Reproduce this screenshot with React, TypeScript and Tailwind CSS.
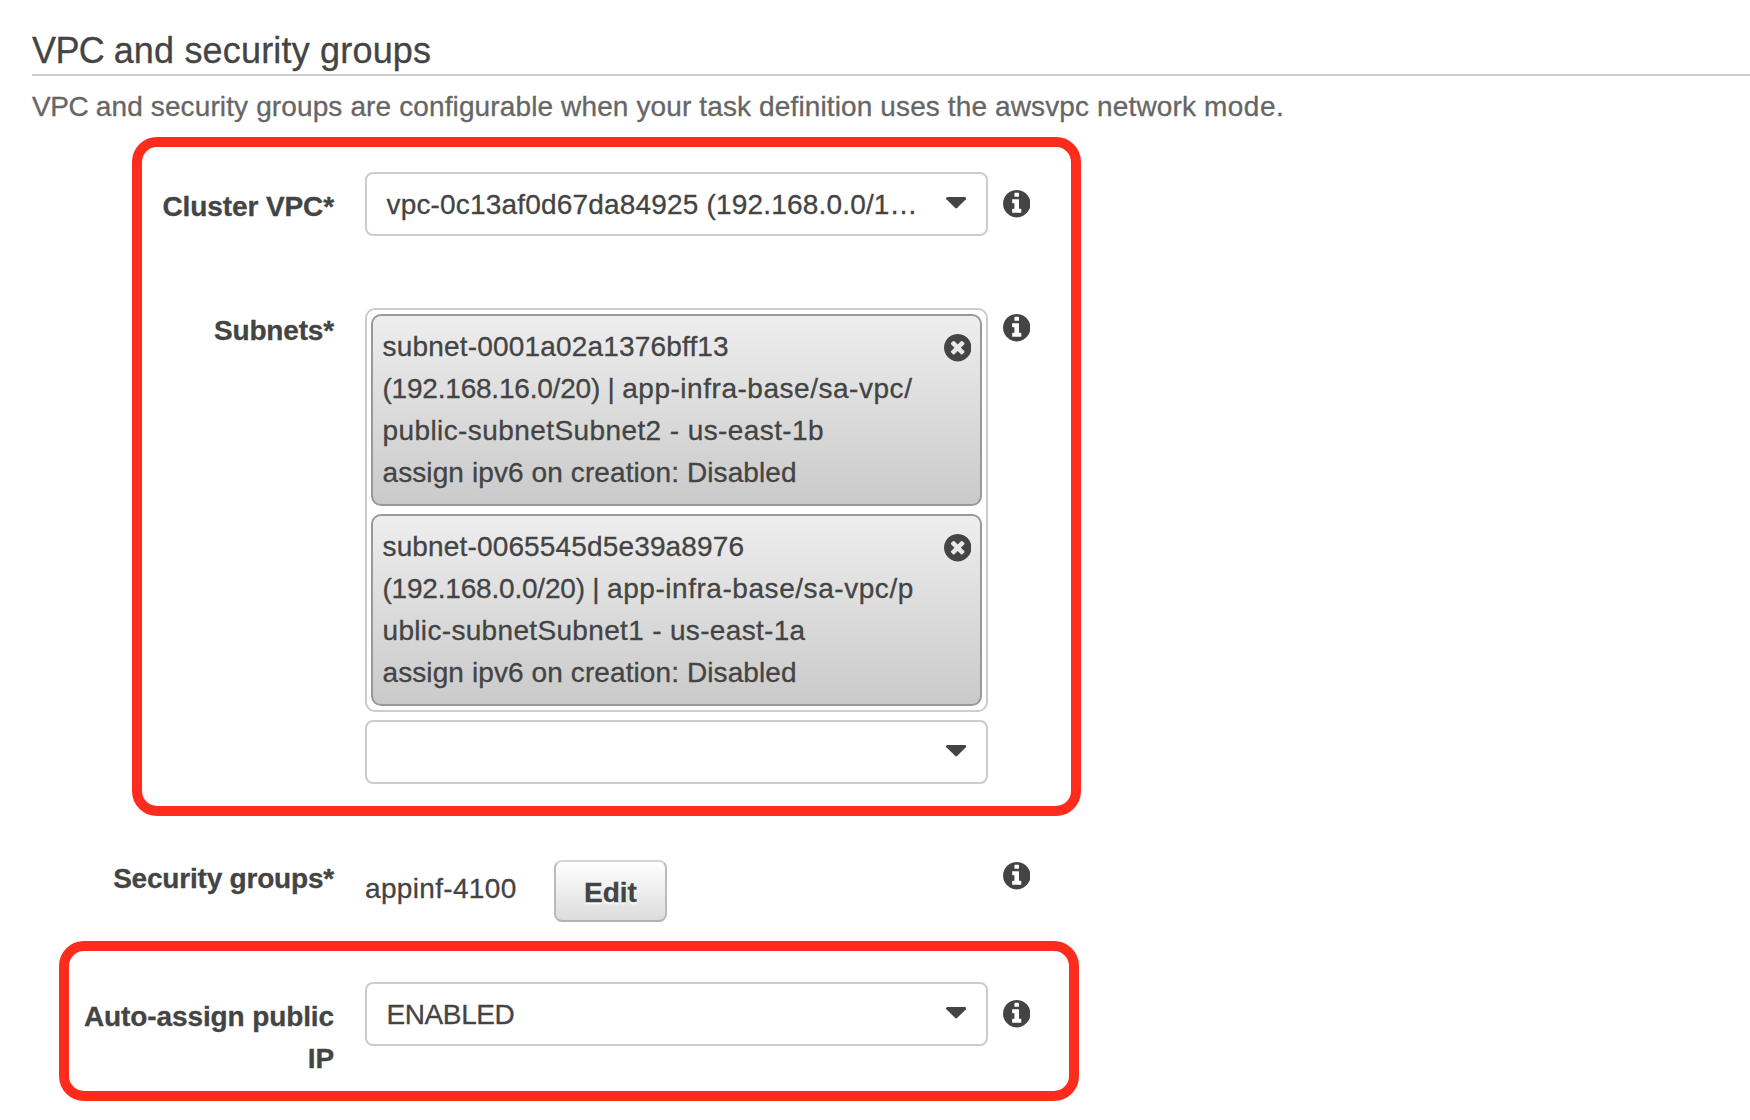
import type { ReactNode } from "react";

function InfoIcon({ className }: { className: string }) {
  return (
    <svg viewBox="0 0 1536 1536" className={`ml-[14.6px] size-[27.43px] shrink-0 fill-[#444] ${className}`} aria-label="Info">
      <path d="M1024 1248v-160q0-14-9-23t-23-9h-96v-512q0-14-9-23t-23-9h-320q-14 0-23 9t-9 23v160q0 14 9 23t23 9h96v320h-96q-14 0-23 9t-9 23v160q0 14 9 23t23 9h448q14 0 23-9t9-23zM896 352v-160q0-14-9-23t-23-9h-192q-14 0-23 9t-9 23v160q0 14 9 23t23 9h192q14 0 23-9t9-23zM1536 768q0 209-103 385.500t-279.500 279.500t-385.500 103t-385.500-103t-279.500-279.500t-103-385.500t103-385.500t279.500-279.500t385.500-103t385.500 103t279.500 279.500t103 385.500z" />
    </svg>
  );
}

function RemoveIcon() {
  return (
    <svg viewBox="0 0 1536 1536" className="mt-[8.4px] size-[27.43px] shrink-0 fill-[#444]" aria-label="Remove">
      <path d="M1149 994q0-26-19-45l-181-181 181-181q19-19 19-45 0-27-19-46l-90-90q-19-19-46-19-26 0-45 19l-181 181-181-181q-19-19-45-19-27 0-46 19l-90 90q-19 19-19 46 0 26 19 45l181 181-181 181q-19 19-19 45 0 27 19 46l90 90q19 19 46 19 26 0 45-19l181-181 181 181q19 19 45 19 27 0 46-19l90-90q19-19 19-46zM1536 768q0 209-103 385.500t-279.500 279.500t-385.500 103t-385.500-103t-279.500-279.500t-103-385.500t103-385.500t279.500-279.500t385.500-103t385.500 103t279.500 279.500t103 385.500z" />
    </svg>
  );
}

function Caret() {
  return (
    <svg viewBox="0 0 1024 576" className="mb-1 h-[11.4px] w-[20.3px] shrink-0 fill-[#444]" aria-hidden="true">
      <path d="M1024 64q0 26-19 45l-448 448q-19 19-45 19t-45-19l-448-448q-19-19-19-45t19-45 45-19h896q26 0 45 19t19 45z" />
    </svg>
  );
}

function Select({ children }: { children?: ReactNode }) {
  return (
    <div className="flex h-16 w-full items-center justify-between rounded-lg border-2 border-[#ccc] bg-white pt-0.5 pr-5 pl-[19.5px]">
      <span className="whitespace-nowrap">{children}</span>
      <Caret />
    </div>
  );
}

function Label({ className, children }: { className: string; children: ReactNode }) {
  return <div className={`mr-[31px] shrink-0 text-right font-bold ${className}`}>{children}</div>;
}

function SubnetTag({ children }: { children: ReactNode }) {
  return (
    <div className="flex h-48 justify-between rounded-[10px] border-2 border-[#999] bg-linear-to-b from-[#eee] to-[#cacaca] pt-2.5 pr-[8.7px] pl-[9.5px]">
      <div className="whitespace-nowrap">{children}</div>
      <RemoveIcon />
    </div>
  );
}

export default function App() {
  return (
    <main className="h-[1120px] w-full overflow-hidden bg-white font-['Helvetica_Neue','Liberation_Sans',sans-serif] text-[28px] leading-[42px] text-[#444] [-webkit-text-stroke:0.3px]">
      <header className="ml-8 pt-7">
        <h1 className="h-12 border-b-2 border-[#ccc] text-[36px] leading-[45px] tracking-[0.18px]">
          <span className="tracking-[-0.6px]">VPC </span>and security groups
        </h1>
        <p className="mt-2.5 tracking-[0.125px] text-[#666]">
          <span className="tracking-[-0.4px]">VPC </span>
          and security groups are configurable when your task definition uses the awsvpc network{" "}
          <span className="tracking-[0.5px]">mode.</span>
        </p>
      </header>

      <section className="mt-[9px] ml-[132px] h-[679px] w-[949px] rounded-[25px] border-10 border-[#ff2c1e] pt-[25px]">
        <div className="flex items-start">
          <Label className="mt-3.5 w-48 tracking-[-0.1px]">Cluster VPC*</Label>
          <div className="w-[623px]">
            <Select>
              <span className="tracking-[0.18px]">vpc-0c13af0d67da84925 (192.168.0.0/1…</span>
            </Select>
          </div>
          <InfoIcon className="mt-[18.4px]" />
        </div>

        <div className="mt-[72px] flex items-start">
          <Label className="mt-0.5 w-48 tracking-[-0.17px]">Subnets*</Label>
          <div className="flex w-[623px] flex-col gap-2">
            <div className="flex flex-col gap-2 rounded-[10px] border-2 border-[#ccc] p-1">
              <SubnetTag>
                <div className="tracking-[0.18px]">subnet-0001a02a1376bff13</div>
                <div className="tracking-[0.53px]">
                  <span className="tracking-[-0.21px]">(192.168.16.0/20) | </span>app-infra-base/sa-vpc/
                </div>
                <div className="tracking-[0.41px]">public-subnetSubnet2 - us-east-1b</div>
                <div className="tracking-[0.1px]">assign ipv6 on creation: Disabled</div>
              </SubnetTag>
              <SubnetTag>
                <div className="tracking-[0.15px]">subnet-0065545d5e39a8976</div>
                <div className="tracking-[0.55px]">
                  <span className="tracking-[-0.2px]">(192.168.0.0/20) | </span>app-infra-base/sa-vpc/p
                </div>
                <div className="tracking-[0.33px]">ublic-subnetSubnet1 - us-east-1a</div>
                <div className="tracking-[0.1px]">assign ipv6 on creation: Disabled</div>
              </SubnetTag>
            </div>
            <Select />
          </div>
          <InfoIcon className="mt-[6.4px]" />
        </div>
      </section>

      <section className="mt-[41px] flex h-[65px] items-start">
        <Label className="mt-px w-[334px] tracking-[-0.2px]">Security groups*</Label>
        <div className="flex w-[623px] items-start">
          <span className="mt-[11px] w-[189px] tracking-[0.33px]">appinf-4100</span>
          <button
            type="button"
            className="mt-[3px] flex h-[62px] w-[113px] items-center justify-center rounded-lg border-2 border-[#bbb] border-t-[#d5d5d5] border-b-[#b2b2b2] bg-linear-to-b from-white to-[#dcdcdc] pt-[3px] font-bold text-shadow-[0_2px_2px_#fff]"
          >
            Edit
          </button>
        </div>
        <InfoIcon className="mt-[5.4px]" />
      </section>

      <section className="mt-[19px] ml-[59px] h-40 w-[1020px] rounded-[25px] border-10 border-[#ff2c1e] pt-[31px]">
        <div className="flex items-start">
          <Label className="mt-3.5 w-[265px] tracking-[-0.11px]">Auto-assign public IP</Label>
          <div className="w-[623px]">
            <Select>
              <span className="tracking-[-0.4px]">ENABLED</span>
            </Select>
          </div>
          <InfoIcon className="mt-[18.4px]" />
        </div>
      </section>
    </main>
  );
}
